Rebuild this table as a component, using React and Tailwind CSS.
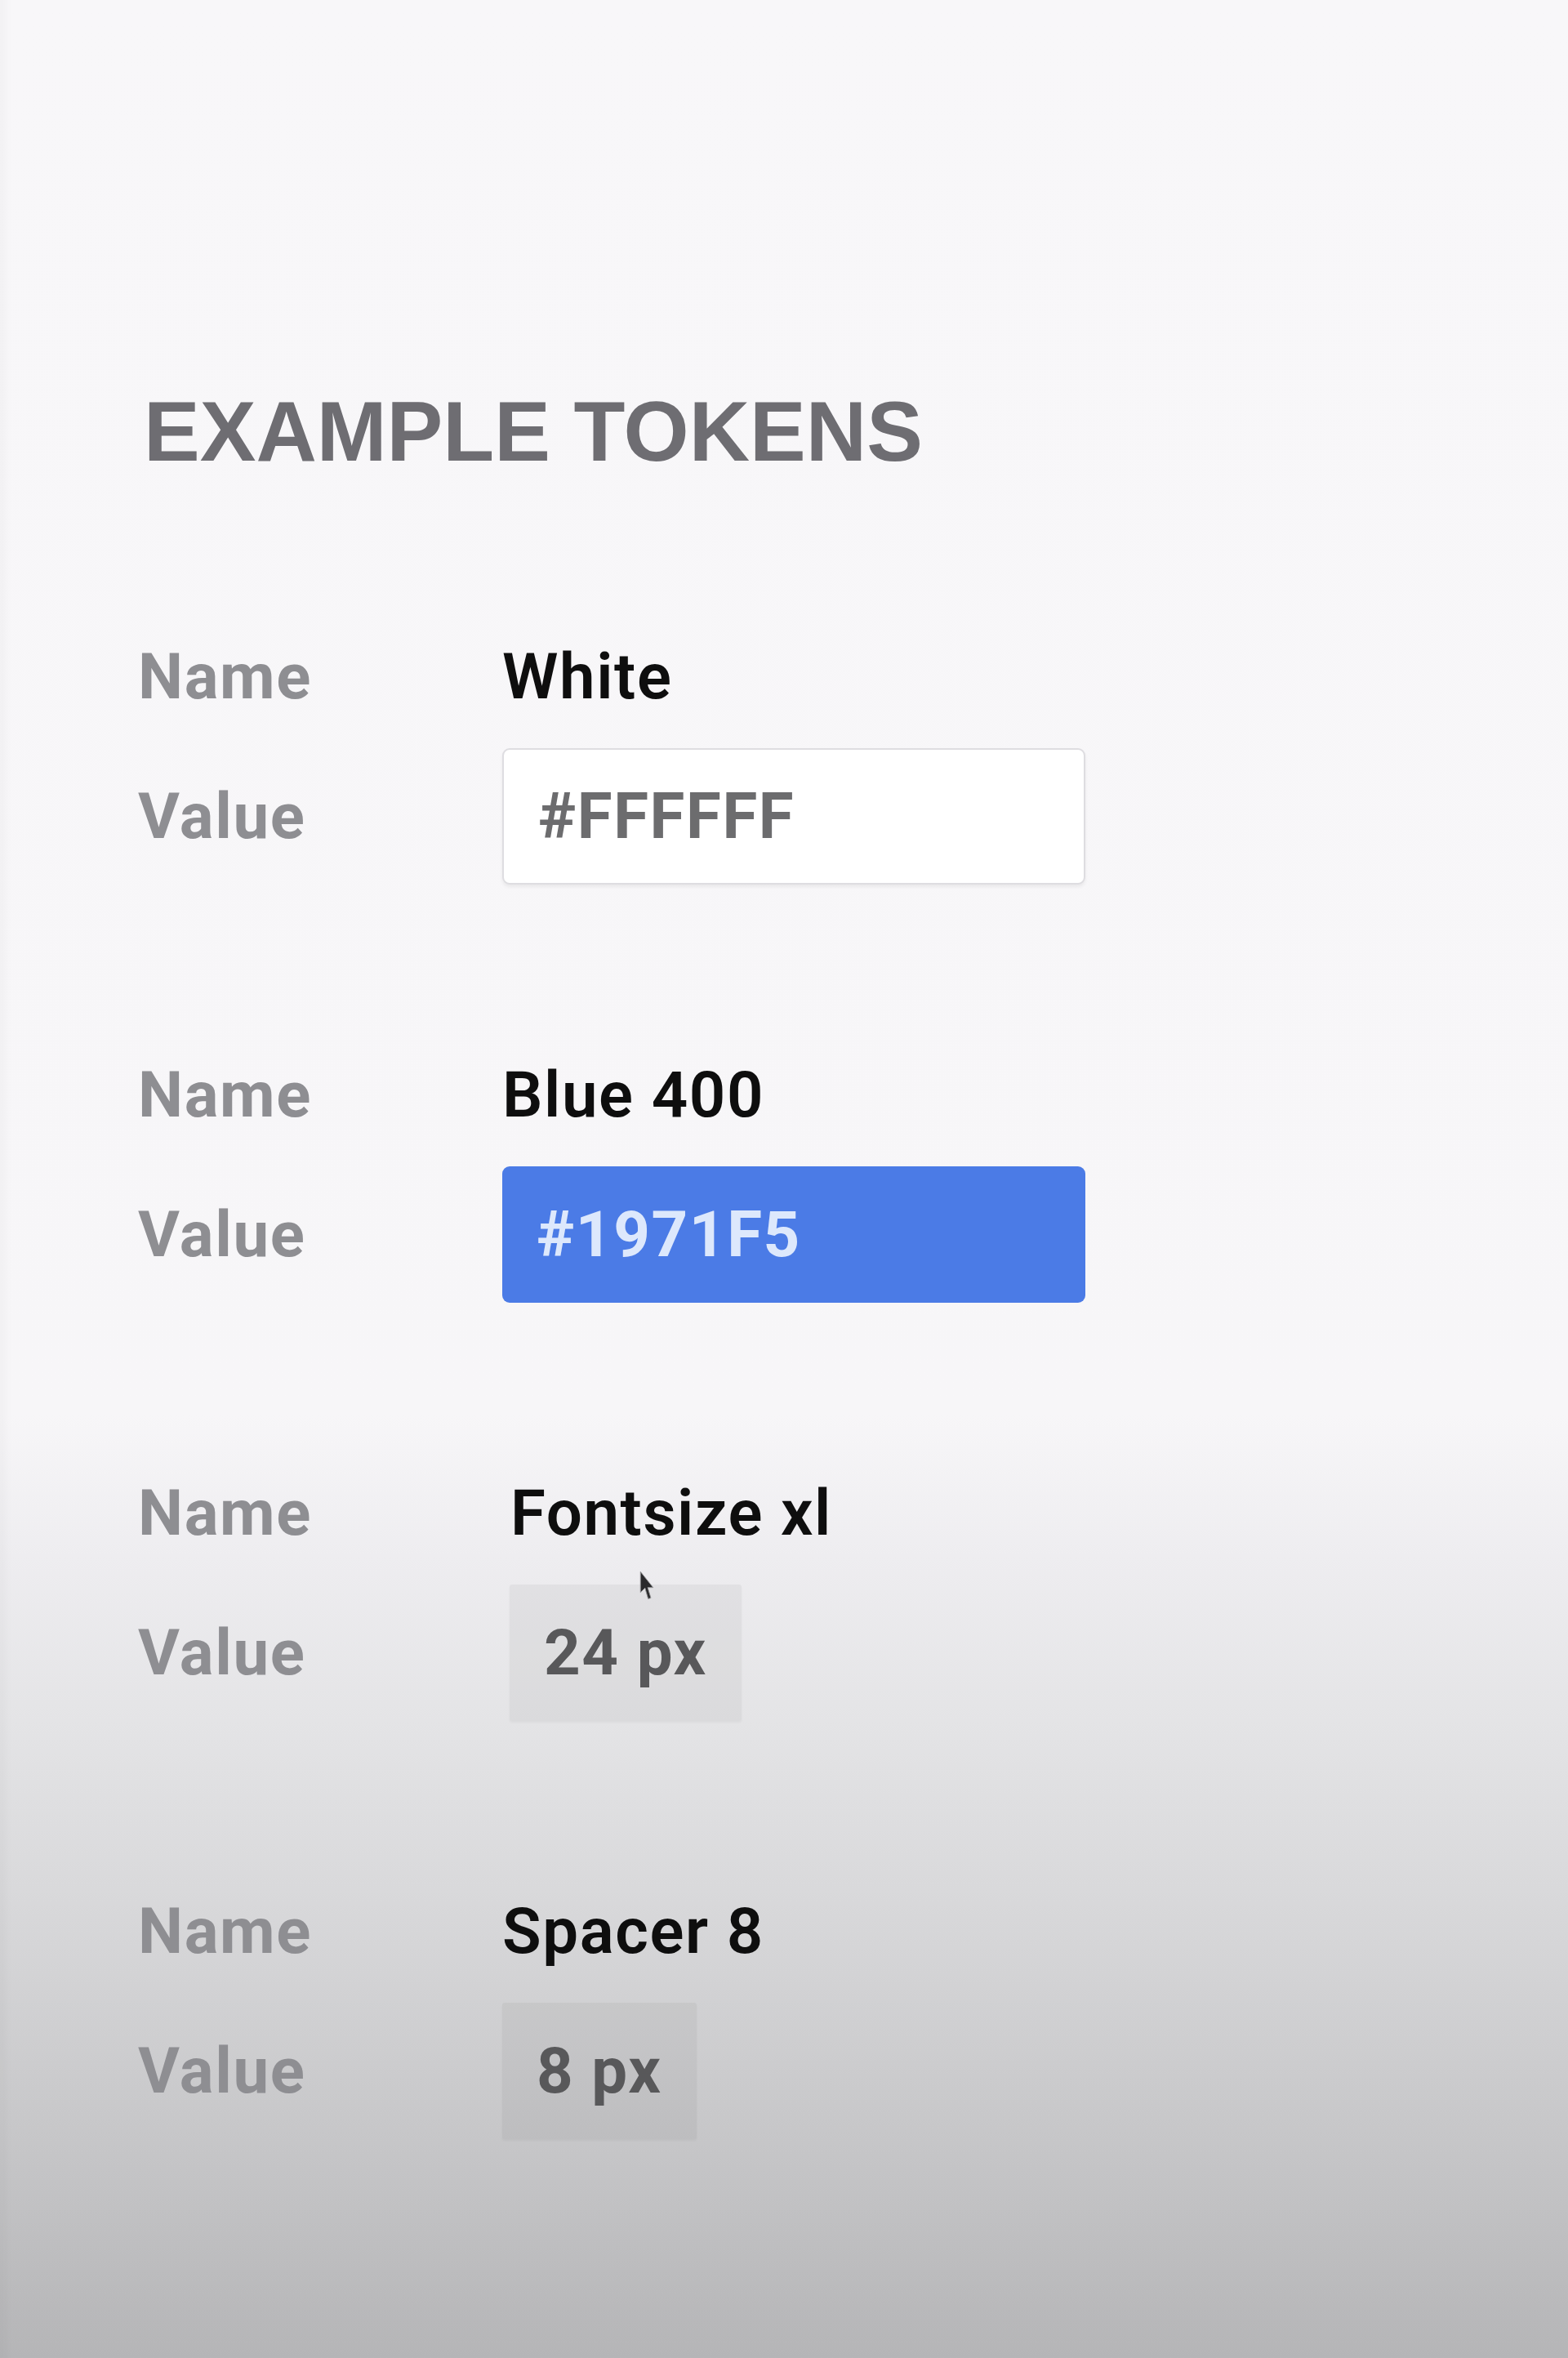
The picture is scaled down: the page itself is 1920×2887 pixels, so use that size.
import React from 'react';

const tokens = [
  { name: 'White', value: '#FFFFFF', kind: 'white' },
  { name: 'Blue 400', value: '#1971F5', kind: 'blue' },
  { name: 'Fontsize xl', value: '24 px', kind: 'size', shift: true },
  { name: 'Spacer 8', value: '8 px', kind: 'spacer' },
];

// mouse pointer caught in the frame
const Cursor = () => (
  <svg className="absolute left-[158px] top-[-18px] w-[20px] h-[40px]" viewBox="0 0 18 34">
    <path d="M2 1 L2 24 L7 19 L10.5 31 L13.5 30 L10 18.5 L16 18.5 Z" fill="#2a2a2c" stroke="#9a9a9c" strokeWidth="0.8" />
  </svg>
);

const ValueBox = ({ token }) => {
  if (token.kind === 'white') {
    return (
      <div className="w-[714px] h-[167px] flex items-center px-[42px] bg-white border-2 border-[#dedde1] rounded-[9px] shadow-[0_3px_4px_rgba(0,0,0,0.06)] text-[#6c6c6e]">
        {token.value}
      </div>
    );
  }
  if (token.kind === 'blue') {
    return (
      <div className="w-[714px] h-[167px] flex items-center px-[42px] bg-[#4b7be6] rounded-[9px] text-[#dde8fc]">
        {token.value}
      </div>
    );
  }
  return (
    <div className="h-[167px] flex items-center px-[42px] bg-black/[0.045] rounded-[3px] shadow-[0_2px_3px_rgba(0,0,0,0.04)] text-[#58585a]">
      {token.value}
    </div>
  );
};

export default function App() {
  return (
    <div
      className="min-h-[2887px] w-full bg-[linear-gradient(to_bottom,#f8f7f9_0%,#f7f6f8_60%,#eeedf0_66%,#e4e4e6_73%,#d6d6d8_82%,#c4c4c6_92%,#b5b5b7_100%)] shadow-[inset_16px_0_10px_-8px_rgba(0,0,0,0.025)] pl-[169px] pt-[477px]"
      style={{ fontFamily: 'Roboto, "Liberation Sans", Arial, sans-serif' }}
    >
      <h1 className="ml-[7px] font-['Liberation_Sans',Arial,sans-serif] text-[103px] leading-none font-bold text-[#6e6d72]">
        EXAMPLE TOKENS
      </h1>

      <div className="mt-[210px] flex flex-col gap-[219px]">
        {tokens.map((t) => (
          <div key={t.name} className="grid grid-cols-[446px_auto] gap-y-[48px] text-[78px] leading-none font-bold tracking-[1.6px]">
            <div className="text-[#8e8e92] h-[78px] flex items-center">Name</div>
            <div className={`text-[#0e0e0e] font-semibold h-[78px] flex items-center ${t.shift ? 'ml-[10px]' : ''}`}>
              {t.name}
            </div>
            <div className="text-[#8e8e92] h-[167px] flex items-center">Value</div>
            <div className={`relative flex ${t.shift ? 'ml-[9px]' : ''}`}>
              {t.kind === 'size' && <Cursor />}
              <ValueBox token={t} />
            </div>
          </div>
        ))}
      </div>
    </div>
  );
}
